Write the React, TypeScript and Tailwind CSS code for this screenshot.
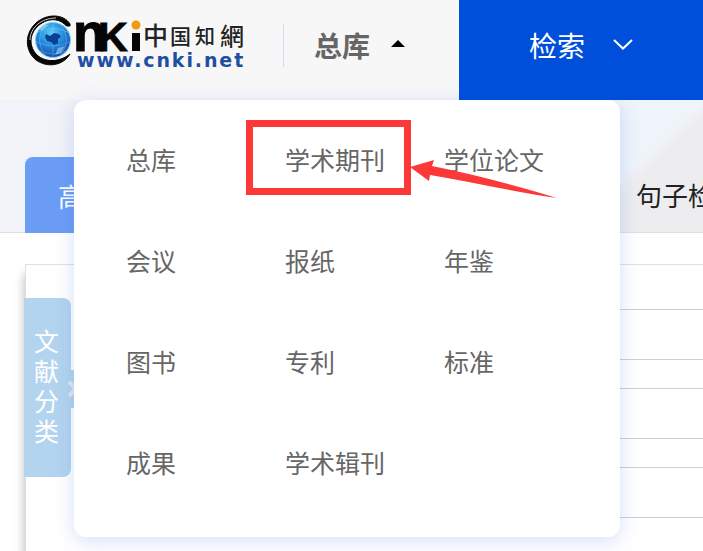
import React, { useState } from "react";

const resources = [
  "总库", "学术期刊", "学位论文",
  "会议", "报纸", "年鉴",
  "图书", "专利", "标准",
  "成果", "学术辑刊",
];

const fields = ["主题", "作者", "文献来源"];

function Logo() {
  return (
    <svg width="220" height="56" viewBox="26 14 220 56" role="img" aria-label="中国知网" className="shrink-0">
      <defs>
        <radialGradient id="globe" cx="0.45" cy="0.3" r="0.75">
          <stop offset="0" stopColor="#5ccdf8" />
          <stop offset="0.5" stopColor="#2288dc" />
          <stop offset="1" stopColor="#123f9e" />
        </radialGradient>
      </defs>
      <path d="M70 24 C64 14 47 13 36 23 C24 34 25 51 36 60 C47 68 63 66 70 54 C60 62 46 63 37 55 C29 47 29 35 37 27 C46 18 59 17 66 26 L70 26 Z" fill="#050505" stroke="#050505" strokeWidth="1" />
      <path d="M30 40 C30 28 41 18 56 18" fill="none" stroke="#f7f7f7" strokeWidth="0.8" />
      <circle cx="53" cy="40" r="19" fill="#f7f7f7" />
      <circle cx="53" cy="40" r="17.500" fill="url(#globe)" stroke="#7fd3f4" strokeWidth="1" />
      <g fill="none" stroke="#a5e2ff" strokeWidth="0.8" opacity="0.4">
        <path d="M38 32 Q53 25 68 32 M36 42 Q53 50 70 42 M40 51 Q53 57 66 51" />
        <path d="M53 23 V57 M45 25 Q34 40 45 55 M61 25 Q72 40 61 55" />
      </g>
      <path d="M46 34 l4 2 4-3 5 1 2 3-3 2 0 4-4 2-3-3-4-1-2-4z" fill="#0c3f92" />
      <path d="M39 27 l5-3 5 1-4 3-4 3zM58 48l7-2-4 7-6 2z" fill="#c1efff" opacity="0.5" />
      <g fill="#050505" stroke="#050505" strokeWidth="1" fontFamily="'Liberation Sans', Arial, sans-serif" fontWeight="700">
        <text x="73" y="51" fontSize="54">n</text>
        <text x="98" y="51" fontSize="41">K</text>
      </g>
      <rect x="132" y="33" width="8" height="18" fill="#050505" />
      <circle cx="136" cy="25" r="4.500" fill="#f39a0b" />
      <g fill="#222" fontFamily="'Noto Sans CJK TC', 'Noto Sans CJK SC', sans-serif" fontWeight="500">
        <text x="143" y="45" fontSize="25">中</text>
        <text x="170" y="44" fontSize="21">国</text>
        <text x="195" y="44" fontSize="20">知</text>
        <text x="220" y="45" fontSize="24">網</text>
      </g>
      <text x="77" y="67" fontSize="19" fill="#1f4fa3" fontFamily="'DejaVu Sans', Verdana, sans-serif" fontWeight="700" className="tracking-widest">www.cnki.net</text>
    </svg>
  );
}

function ResourceMenu() {
  return (
    <nav aria-label="资源类型" className="absolute left-[74px] top-full z-10 grid grid-cols-[repeat(3,159px)] auto-rows-[101px] rounded-xl bg-white pb-[25px] pl-[52px] pr-[17px] pt-2 shadow-[0_4px_20px_rgba(60,110,230,0.22)]">
      {resources.map((name) => (
        <a key={name} href="#" className="flex items-center text-[25px] leading-9 text-[#666]">
          {name}
        </a>
      ))}
      <span aria-hidden="true" className="pointer-events-none absolute left-[172px] top-5 h-[75px] w-[165px] border-[7px] border-[#fc3838]" />
      <svg aria-hidden="true" width="148" height="40" viewBox="0 0 148 40" className="pointer-events-none absolute left-[336px] top-[60px]">
        <path d="M0 7 L24 0 L22 6 C67 15 107 26 147 38 C105 32 62 22 20 15 L19 21 Z" fill="#fc3838" />
      </svg>
    </nav>
  );
}

export default function App() {
  const [open, setOpen] = useState(true);

  return (
    <div className="flex min-h-screen flex-col overflow-hidden bg-white font-['Noto_Sans_CJK_SC',sans-serif]">
      <header className="relative z-10 flex h-[100px] bg-[#f7f7f7]">
        <div className="flex w-[459px] shrink-0 items-center pb-2.5 pl-[26px]">
          <a href="#" className="-mt-1.5"><Logo /></a>
          <span className="ml-[37px] h-[43px] w-px bg-[#cbdcf7]" />
          <button type="button" aria-expanded={open} onClick={() => setOpen(!open)} className="ml-[30px] flex items-center gap-[21px] text-[28px] font-bold leading-10 text-[#666]">
            总库
            <svg width="14" height="7" viewBox="0 0 14 7" className="-mt-1" aria-hidden="true"><path d="M0 7 L7 0 L14 7Z" fill="#000" /></svg>
          </button>
        </div>
        <button type="button" className="relative z-20 flex flex-1 items-center gap-7 bg-[#004fdb] pb-2.5 pl-[70px] text-[28px] leading-10 text-white">
          检索
          <svg width="20" height="11" viewBox="0 0 20 11" className="-mt-0.5" aria-hidden="true"><path d="M1 1 L10 9.500 L19 1" fill="none" stroke="#fff" strokeWidth="2" /></svg>
        </button>
        {open && <ResourceMenu />}
      </header>

      <div className="flex h-[133px] items-end border-b border-[#dedfe1] bg-[#f2f3f8]">
        <button type="button" className="-mb-px ml-[25px] h-[76px] w-[170px] rounded-t-lg bg-[#6c9df5] text-[26px] text-white">高级检索</button>
        <div className="ml-auto flex h-full w-[83px] items-end bg-[linear-gradient(137deg,#eef4fa_38%,#f0eff2_42%,#ededef_46%)]">
          <button type="button" className="h-[75px] whitespace-nowrap pl-4 text-[26px] text-[#222]">句子检索</button>
        </div>
      </div>

      <main className="ml-[25px] mt-[31px] flex flex-1 items-start border-l border-t border-[#e0e0e0] shadow-[0_10px_10px_rgba(0,0,0,0.3)]">
        <aside className="relative -ml-0.5 mt-[33px] flex h-[179px] w-[47px] shrink-0 items-center justify-center rounded-r-lg bg-[#b3d4ee] pb-1.5 pr-0.5">
          <h2 className="w-[25px] text-[25px] leading-[30px] text-white">文献分类</h2>
          <button type="button" aria-label="展开文献分类" className="absolute -right-3 top-[72px] flex h-[38px] w-4 items-center rounded bg-[#b3d4ee]">
            <svg width="14" height="18" viewBox="0 0 14 18" aria-hidden="true"><path d="M2 2 L9 9 L2 16" fill="none" stroke="#e3e5e9" strokeWidth="4" /></svg>
          </button>
        </aside>
        <form className="flex flex-1 flex-col gap-7 pl-20 pt-11">
          {fields.map((name) => (
            <input key={name} type="text" aria-label={name} className="h-[51px] w-full border-y border-[#c8d0dc] px-4 text-[25px] outline-none" />
          ))}
        </form>
      </main>
    </div>
  );
}
